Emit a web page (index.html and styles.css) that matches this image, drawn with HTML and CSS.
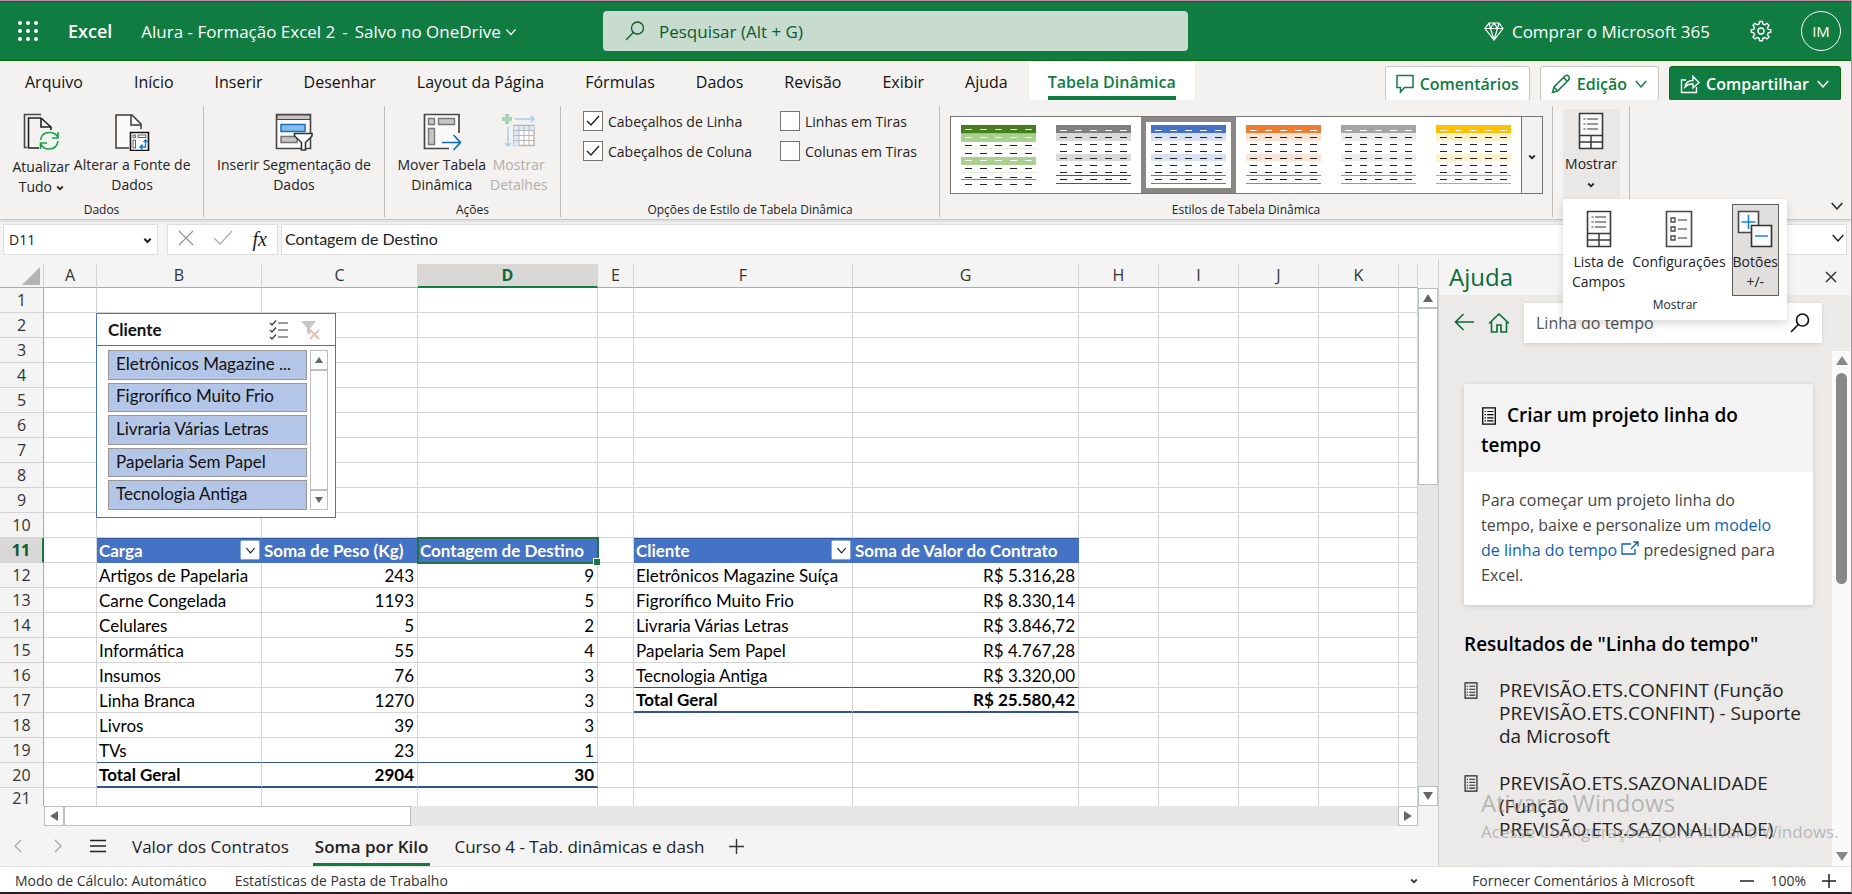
FILE: index.html
```html
<!DOCTYPE html>
<html lang="pt-BR">
<head>
<meta charset="utf-8">
<title>Alura - Formação Excel 2 - Excel</title>
<link rel="stylesheet" href="styles.css">
</head>
<body>
<svg class="sprite" aria-hidden="true">
  <symbol id="chev" viewBox="0 0 12 12"><path d="M1.500 3.500 6 8.500l4.500-5" fill="none" stroke="currentColor" stroke-width="1.300"/></symbol>
  <symbol id="chev-bold" viewBox="0 0 8 8"><path d="M1.200 2.500 4 5.300l2.800-2.800" fill="none" stroke="currentColor" stroke-width="1.800"/></symbol>
  <symbol id="article" viewBox="0 0 16 20"><path d="M1 1h14v18H1z" fill="none" stroke="currentColor" stroke-width="1.400"/><path d="M6 5h7M6 8.500h7M6 12h7M6 15.500h7M3 5h1.500M3 8.500h1.500M3 12h1.500M3 15.500h1.500" stroke="currentColor" stroke-width="1.300"/></symbol>
  <symbol id="fieldlist" viewBox="0 0 26 38"><path d="M1.500 1.500h23v35h-23z" fill="#fafafa" stroke="#3b3a39" stroke-width="1.600"/><path d="M1.500 23.500h23M1.500 30h23M13 23.500v13" stroke="#3b3a39" stroke-width="1.500" fill="none"/><path d="M9 7h11M9 12h11M9 17h11M5.500 7h2M5.500 12h2M5.500 17h2" stroke="#797775" stroke-width="1.500"/></symbol>
  <symbol id="pivot" viewBox="0 0 75 60">
    <path class="c-head" d="M0 0h75v8H0z"/><path class="c-band" d="M0 8h75v8H0zM0 29h75v7H0z"/>
    <path d="M4 5.500h68" stroke="#fff" stroke-dasharray="7 8"/>
    <path d="M4 12.500h68M4 19.500h68M4 26.500h68M4 33.500h68M4 40.500h68M4 47.500h68M4 54.500h68" stroke="#222" stroke-dasharray="7 8"/>
    <path class="c-line" d="M0 50.500h75M0 58.500h75"/>
  </symbol>
</svg>
<div class="app">
  <header class="titlebar">
    <button class="launcher" aria-label="Inicializador de aplicativos">
      <svg width="22" height="22" viewBox="0 0 22 22" fill="#fff"><circle cx="3" cy="3" r="2"/><circle cx="11" cy="3" r="2"/><circle cx="19" cy="3" r="2"/><circle cx="3" cy="11" r="2"/><circle cx="11" cy="11" r="2"/><circle cx="19" cy="11" r="2"/><circle cx="3" cy="19" r="2"/><circle cx="11" cy="19" r="2"/><circle cx="19" cy="19" r="2"/></svg>
    </button>
    <span class="brand">Excel</span>
    <button class="docname"><span>Alura - Formação Excel 2</span><span>-</span><span>Salvo no OneDrive <svg width="12" height="12"><use href="#chev"/></svg></span></button>
    <label class="search">
      <svg width="20" height="20" viewBox="0 0 20 20" fill="none" stroke="#0b5a2e" stroke-width="1.300"><circle cx="12.500" cy="7" r="6"/><path d="M8.300 11.500 1 19"/></svg>
      <input type="search" placeholder="Pesquisar (Alt + G)" aria-label="Pesquisar">
    </label>
    <button class="buy"><svg width="20" height="20" viewBox="0 0 20 20" fill="none" stroke="#fff" stroke-width="1.200"><path d="M5 2h10l4 5.500L10 19 1 7.500zM1 7.500h18M5 2l1.500 5.500L10 19l3.500-11.500L15 2M6.500 7.500 10 2l3.500 5.500"/></svg>Comprar o Microsoft 365</button>
    <button class="gear" aria-label="Configurações"><svg width="22" height="22" viewBox="0 0 22 22" fill="none" stroke="#fff" stroke-width="1.400"><circle cx="11" cy="11" r="3"/><path d="M9.600 1.500h2.800l.5 2.500 1.900.8 2.200-1.500 2 2-1.500 2.200.8 1.900 2.400.5v2.400l-2.400.5-.8 2 1.500 2.100-2 2-2.200-1.400-1.900.8-.5 2.400H9.600l-.5-2.400-1.900-.8L5 18.900l-2-2 1.500-2.100-.8-2-2.400-.5V9.900l2.400-.5.8-1.900L3 5.300l2-2 2.200 1.500L9.100 4z"/></svg></button>
    <button class="avatar">IM</button>
  </header>

  <nav class="tabs">
    <button class="tab file">Arquivo</button><button class="tab">Início</button><button class="tab">Inserir</button><button class="tab">Desenhar</button><button class="tab">Layout da Página</button><button class="tab">Fórmulas</button><button class="tab">Dados</button><button class="tab">Revisão</button><button class="tab">Exibir</button><button class="tab">Ajuda</button><button class="tab active"><span>Tabela Dinâmica</span></button>
    <div class="actions">
      <button class="act"><svg width="18" height="20" viewBox="0 0 18 20" fill="none" stroke="currentColor" stroke-width="1.500"><path d="M1 1.500h16v12H8.500L4.500 18v-4.500H1z"/></svg>Comentários</button>
      <button class="act"><svg width="20" height="20" viewBox="0 0 20 20" fill="none" stroke="currentColor" stroke-width="1.500"><path d="M1.500 18.500 3 13 14 2q2-1.500 3.500 0t0 4L6.500 17zM12.500 3.500l4 4M3 13l3.500 4"/></svg>Edição<svg class="gap" width="14" height="14"><use href="#chev"/></svg></button>
      <button class="act primary"><svg width="20" height="20" viewBox="0 0 20 20" fill="none" stroke="currentColor" stroke-width="1.400"><path d="M6 6H1.500v12.500h15V13M5 13q1-6.500 8-6.500V2.500l6 6-6 5.500v-4Q8 9.500 5 13z"/></svg>Compartilhar<svg class="gap" width="14" height="14"><use href="#chev"/></svg></button>
    </div>
  </nav>

  <section class="ribbon">
    <div class="group g-data">
      <div class="tools">
        <button class="tool low"><svg width="36" height="38" viewBox="0 0 36 38" fill="none"><path d="M18 1.500H1.500v33H4" stroke="#484644" stroke-width="1.600"/><path d="M18 5H5.500v30H16M18 5l10 9v3M18 5v9h10" stroke="#222" stroke-width="1.600"/><path d="M17.500 27q1-7.500 9-7.500 6 0 8.500 5M35 19v6h-6M35 28q-1 8-9 8-6 0-8-5M17.500 36v-6H24" stroke="#16a34a" stroke-width="1.600"/></svg><span>Atualizar<br>Tudo <svg width="8" height="8"><use href="#chev-bold"/></svg></span></button>
        <button class="tool wide"><svg width="36" height="38" viewBox="0 0 36 38" fill="none"><path d="M15 35H2V2h16l9 9v5" fill="#fafafa" stroke="#3b3a39" stroke-width="1.500"/><path d="M17 2v10h10" stroke="#3b3a39" stroke-width="1.500"/><path d="M16.500 19.500h18v18h-18z" fill="#fff" stroke="#111" stroke-width="1.600"/><path d="M19 22h2.500v2.500H19zM24 22h8v2.500h-8zM19 27h2.500v8H19z" stroke="#605e5c"/><path d="M31.500 27v7H26m2.500-2.500L26 34l2.500 2.500M29.500 29l2-2 2 2" stroke="#0078d4" stroke-width="1.300"/></svg><span>Alterar a Fonte de<br>Dados</span></button>
      </div>
      <h2>Dados</h2>
    </div>
    <div class="group g-slicer">
      <div class="tools">
        <button class="tool"><svg width="38" height="38" viewBox="0 0 38 38" fill="none"><path d="M1.500 1.500h34v34h-34z" fill="#fafafa" stroke="#484644" stroke-width="1.600"/><path d="M2 2h33v4.500H2z" fill="#c8c6c4" stroke="#484644"/><path d="M6 11.500h24v7H6z" fill="#83beec" stroke="#1f6fbf" stroke-width="1.500"/><path d="M6 23.500h16v6H6z" fill="#c8c6c4" stroke="#797775" stroke-width="1.500"/><path d="M19.500 20.500H37v2.500l-6.500 6.500V37h-4v-7.500L19.500 23z" fill="#fff" stroke="#333" stroke-width="1.600"/></svg><span>Inserir Segmentação de<br>Dados</span></button>
      </div>
    </div>
    <div class="group g-actions">
      <div class="tools">
        <button class="tool"><svg width="38" height="38" viewBox="0 0 38 38" fill="none"><path d="M36 20V1.500H1.500v34H26" fill="#fafafa" stroke="#484644" stroke-width="1.700"/><path d="M5.500 5.500h6v6h-6zM15.500 5.500h16v6h-16zM5.500 15.500h6v16h-6z" fill="#c8c6c4" stroke="#797775" stroke-width="1.400"/><path d="M19 29.500h18M30.500 22l7 7.500-7 7.500" stroke="#0f6cbd" stroke-width="1.600"/></svg><span>Mover Tabela<br>Dinâmica</span></button>
        <button class="tool" disabled><svg width="34" height="38" viewBox="0 0 34 38" fill="none"><path d="M5 1v10M0 6h10" stroke="#a9d3b9" stroke-width="4"/><path d="M13 6h19m-3-3 3 3-3 3M6 14v19m-3-3 3 3 3-3" stroke="#a6cdec" stroke-width="1.500"/><path d="M12 12.500h20v20H12z" fill="#fff" stroke="#b9b7b5" stroke-width="1.500"/><path d="M12 13h20v4H12zM12 13h5v20h-5z" fill="#dcebf7"/><path d="M17 13v20M22 13v20M27 13v20M12 17.500h20M12 22.500h20M12 27.500h20" stroke="#b9b7b5"/></svg><span>Mostrar<br>Detalhes</span></button>
      </div>
      <h2>Ações</h2>
    </div>
    <div class="group g-options">
      <div class="checks">
        <label><input type="checkbox" checked>Cabeçalhos de Linha</label>
        <label><input type="checkbox">Linhas em Tiras</label>
        <label><input type="checkbox" checked>Cabeçalhos de Coluna</label>
        <label><input type="checkbox">Colunas em Tiras</label>
      </div>
      <h2>Opções de Estilo de Tabela Dinâmica</h2>
    </div>
    <div class="group g-styles">
      <div class="gallery">
        <button class="style" aria-label="Verde"><svg width="75" height="61" viewBox="0 0 75 61"><path d="M0 1h75v7H0z" fill="#4a7d22"/><path d="M0 .5h75M0 8h75" stroke="#2f8a12"/><path d="M0 9h75v8H0zM0 32h75v8H0z" fill="#a9d08e"/><path d="M4 4.500h68" stroke="#f4ffd0" stroke-dasharray="7 8"/><path d="M4 12.500h68M4 35.500h68" stroke="#fff" stroke-dasharray="7 8"/><path d="M0 23.500h75M0 47.500h75" stroke="#e2efda"/><path d="M0 54.500h75" stroke="#70a050"/><path d="M4 20.500h68M4 28.500h68M4 43.500h68M4 52.500h68M4 59.500h68" stroke="#222" stroke-dasharray="7 8"/></svg></button>
        <button class="style dark" aria-label="Cinza escuro"><svg width="75" height="60"><use href="#pivot"/></svg></button>
        <button class="style blue selected" aria-label="Azul"><svg width="75" height="60"><use href="#pivot"/></svg></button>
        <button class="style orange" aria-label="Laranja"><svg width="75" height="60"><use href="#pivot"/></svg></button>
        <button class="style gray" aria-label="Cinza"><svg width="75" height="60"><use href="#pivot"/></svg></button>
        <button class="style gold" aria-label="Ouro"><svg width="75" height="60"><use href="#pivot"/></svg></button>
        <button class="more" aria-label="Mais estilos"><svg width="8" height="8"><use href="#chev-bold"/></svg></button>
      </div>
      <h2>Estilos de Tabela Dinâmica</h2>
    </div>
    <div class="group g-show">
      <button class="tool open"><svg width="26" height="38"><use href="#fieldlist"/></svg><span>Mostrar<br><svg width="8" height="8"><use href="#chev-bold"/></svg></span></button>
      <div class="flyout">
        <div class="flyout-tools">
          <button class="tool"><svg width="26" height="38"><use href="#fieldlist"/></svg><span>Lista de<br>Campos</span></button>
          <button class="tool"><svg width="28" height="38" viewBox="0 0 28 38" fill="none"><path d="M1.500 1.500h25v35h-25z" fill="#fafafa" stroke="#484644" stroke-width="1.600"/><path d="M6 8h4v4H6zM6 17h4v4H6zM6 26h4v4H6z" stroke="#484644" stroke-width="1.300"/><path d="M13 10h9M13 19h9M13 28h9" stroke="#797775" stroke-width="1.500"/></svg><span>Configurações</span></button>
          <button class="tool pressed"><svg width="36" height="38" viewBox="0 0 36 38"><path d="M1.500 1.500h20v21h-20z" fill="#fafafa" stroke="#484644" stroke-width="1.600"/><path d="M14.500 15.500h20v21h-20z" fill="#fafafa" stroke="#323130" stroke-width="1.600"/><path d="M4.500 12h14M11.500 5v14M18 26h13" stroke="#1a86d9" stroke-width="1.600"/></svg><span>Botões<br>+/-</span></button>
        </div>
        <h2>Mostrar</h2>
      </div>
    </div>
    <button class="collapse" aria-label="Recolher"><svg width="14" height="14"><use href="#chev"/></svg></button>
  </section>

  <section class="formula">
    <div class="namebox"><input type="text" value="D11" aria-label="Caixa de nome"><button aria-label="Abrir nomes"><svg width="9" height="9"><use href="#chev-bold"/></svg></button></div>
    <div class="fxbox">
      <button aria-label="Cancelar"><svg width="16" height="16" viewBox="0 0 16 16" fill="none" stroke="#979593" stroke-width="1.200"><path d="m1 1 14 14M15 1 1 15"/></svg></button>
      <button aria-label="Inserir"><svg width="20" height="16" viewBox="0 0 20 16" fill="none" stroke="#b3b0ad" stroke-width="1.300"><path d="m1 8 6 6L19 1"/></svg></button>
      <button class="fx">fx</button>
    </div>
    <div class="fbar"><input type="text" value="Contagem de Destino" aria-label="Barra de fórmulas"><button aria-label="Expandir"><svg width="14" height="14"><use href="#chev"/></svg></button></div>
  </section>

  <main class="work">
    <section class="book">
      <div class="gridrow">
        <div class="sheet">
          <table class="grid">
            <colgroup><col class="w-h"><col class="w-a"><col class="w-b"><col class="w-c"><col class="w-d"><col class="w-e"><col class="w-f"><col class="w-g"><col class="w-n"><col class="w-n"><col class="w-n"><col class="w-n"><col></colgroup>
            <thead><tr><th class="corner"><svg width="18" height="18" viewBox="0 0 18 18"><path d="M18 0v18H0z" fill="#b4b4b4"/></svg></th><th>A</th><th>B</th><th>C</th><th class="on">D</th><th>E</th><th>F</th><th>G</th><th>H</th><th>I</th><th>J</th><th>K</th><th></th></tr></thead>
            <tbody>
            <tr><th>1</th><td></td><td></td><td></td><td></td><td></td><td></td><td></td><td></td><td></td><td></td><td></td><td></td></tr>
            <tr><th>2</th><td></td><td></td><td></td><td></td><td></td><td></td><td></td><td></td><td></td><td></td><td></td><td></td></tr>
            <tr><th>3</th><td></td><td></td><td></td><td></td><td></td><td></td><td></td><td></td><td></td><td></td><td></td><td></td></tr>
            <tr><th>4</th><td></td><td></td><td></td><td></td><td></td><td></td><td></td><td></td><td></td><td></td><td></td><td></td></tr>
            <tr><th>5</th><td></td><td></td><td></td><td></td><td></td><td></td><td></td><td></td><td></td><td></td><td></td><td></td></tr>
            <tr><th>6</th><td></td><td></td><td></td><td></td><td></td><td></td><td></td><td></td><td></td><td></td><td></td><td></td></tr>
            <tr><th>7</th><td></td><td></td><td></td><td></td><td></td><td></td><td></td><td></td><td></td><td></td><td></td><td></td></tr>
            <tr><th>8</th><td></td><td></td><td></td><td></td><td></td><td></td><td></td><td></td><td></td><td></td><td></td><td></td></tr>
            <tr><th>9</th><td></td><td></td><td></td><td></td><td></td><td></td><td></td><td></td><td></td><td></td><td></td><td></td></tr>
            <tr><th>10</th><td></td><td></td><td></td><td></td><td></td><td></td><td></td><td></td><td></td><td></td><td></td><td></td></tr>
            <tr><th class="on">11</th><td></td><td class="hd"><div class="hdin">Carga<button aria-label="Filtrar Carga"><svg width="11" height="11"><use href="#chev"/></svg></button></div></td><td class="hd">Soma de Peso (Kg)</td><td class="hd sel">Contagem de Destino</td><td></td><td class="hd"><div class="hdin">Cliente<button aria-label="Filtrar Cliente"><svg width="11" height="11"><use href="#chev"/></svg></button></div></td><td class="hd">Soma de Valor do Contrato</td><td></td><td></td><td></td><td></td><td></td></tr>
            <tr><th>12</th><td></td><td>Artigos de Papelaria</td><td class="n">243</td><td class="n">9</td><td></td><td>Eletrônicos Magazine Suíça</td><td class="n">R$ 5.316,28</td><td></td><td></td><td></td><td></td><td></td></tr>
            <tr><th>13</th><td></td><td>Carne Congelada</td><td class="n">1193</td><td class="n">5</td><td></td><td>Figrorífico Muito Frio</td><td class="n">R$ 8.330,14</td><td></td><td></td><td></td><td></td><td></td></tr>
            <tr><th>14</th><td></td><td>Celulares</td><td class="n">5</td><td class="n">2</td><td></td><td>Livraria Várias Letras</td><td class="n">R$ 3.846,72</td><td></td><td></td><td></td><td></td><td></td></tr>
            <tr><th>15</th><td></td><td>Informática</td><td class="n">55</td><td class="n">4</td><td></td><td>Papelaria Sem Papel</td><td class="n">R$ 4.767,28</td><td></td><td></td><td></td><td></td><td></td></tr>
            <tr><th>16</th><td></td><td>Insumos</td><td class="n">76</td><td class="n">3</td><td></td><td class="last">Tecnologia Antiga</td><td class="n last">R$ 3.320,00</td><td></td><td></td><td></td><td></td><td></td></tr>
            <tr><th>17</th><td></td><td>Linha Branca</td><td class="n">1270</td><td class="n">3</td><td></td><td class="tot">Total Geral</td><td class="n tot">R$ 25.580,42</td><td></td><td></td><td></td><td></td><td></td></tr>
            <tr><th>18</th><td></td><td>Livros</td><td class="n">39</td><td class="n">3</td><td></td><td></td><td></td><td></td><td></td><td></td><td></td><td></td></tr>
            <tr><th>19</th><td></td><td class="last">TVs</td><td class="n last">23</td><td class="n last">1</td><td></td><td></td><td></td><td></td><td></td><td></td><td></td><td></td></tr>
            <tr><th>20</th><td></td><td class="tot">Total Geral</td><td class="n tot">2904</td><td class="n tot">30</td><td></td><td></td><td></td><td></td><td></td><td></td><td></td><td></td></tr>
            <tr class="cut"><th>21</th><td></td><td></td><td></td><td></td><td></td><td></td><td></td><td></td><td></td><td></td><td></td><td></td></tr>
            </tbody>
          </table>
          <aside class="slicer">
            <div class="slicer-head"><h3>Cliente</h3>
              <button aria-label="Seleção múltipla"><svg width="20" height="20" viewBox="0 0 20 20" fill="none" stroke="#444" stroke-width="1.400"><path d="M9 3h10M9 10h10M9 17h10" stroke="#797775"/><path d="m1 3 2 2 4-4.500M1 10l2 2 4-4.500M1 17l2 2 4-4.500"/></svg></button>
              <button aria-label="Limpar filtro"><svg width="20" height="20" viewBox="0 0 20 20" fill="none"><path d="M0 1h15L9.500 8v7L6 12.500V8z" fill="#c8c6c4"/><path d="m9 10 9 9M18 10l-9 9" stroke="#f3b9ac" stroke-width="1.800"/></svg></button>
            </div>
            <div class="slicer-body">
              <div class="slicer-items"><button>Eletrônicos Magazine ...</button><button>Figrorífico Muito Frio</button><button>Livraria Várias Letras</button><button>Papelaria Sem Papel</button><button>Tecnologia Antiga</button></div>
              <div class="sbar"><span class="arr up"></span><span class="thumb"></span><span class="arr down"></span></div>
            </div>
          </aside>
        </div>
        <div class="vscroll"><span class="arr up"></span><span class="thumb"></span><span class="track"></span><span class="arr down"></span></div>
      </div>
      <div class="hscroll"><span class="arr left"></span><span class="thumb"></span><span class="track"></span><span class="arr right"></span></div>
      <nav class="sheettabs">
        <button class="nav" aria-label="Anterior"><svg width="10" height="14" viewBox="0 0 10 14" fill="none" stroke="#a8a8a8" stroke-width="1.300"><path d="M8 1 2 7l6 6"/></svg></button>
        <button class="nav" aria-label="Próxima"><svg width="10" height="14" viewBox="0 0 10 14" fill="none" stroke="#a8a8a8" stroke-width="1.300"><path d="m2 1 6 6-6 6"/></svg></button>
        <button class="nav" aria-label="Todas as planilhas"><svg width="16" height="14" viewBox="0 0 16 14" stroke="#222" stroke-width="1.500"><path d="M0 1.500h16M0 7h16M0 12.500h16"/></svg></button>
        <button class="st">Valor dos Contratos</button><button class="st on">Soma por Kilo</button><button class="st">Curso 4 - Tab. dinâmicas e dash</button>
        <button class="nav" aria-label="Nova planilha"><svg width="15" height="15" viewBox="0 0 15 15" stroke="#333" stroke-width="1.400"><path d="M7.500 0v15M0 7.500h15"/></svg></button>
      </nav>
    </section>

    <aside class="help">
      <div class="help-head"><h2>Ajuda</h2><button aria-label="Fechar"><svg width="12" height="12" viewBox="0 0 12 12" stroke="#333" stroke-width="1.500"><path d="m1 1 10 10M11 1 1 11"/></svg></button></div>
      <div class="help-nav">
        <button aria-label="Voltar"><svg width="20" height="18" viewBox="0 0 20 18" fill="none" stroke="#0b6a37" stroke-width="1.600"><path d="M20 9H1.500M9.500 1l-8 8 8 8"/></svg></button>
        <button aria-label="Início"><svg width="22" height="20" viewBox="0 0 22 20" fill="none" stroke="#0b6a37" stroke-width="1.600"><path d="M1 10.500 11 1l10 9.500M3.500 9v10H9v-7h4v7h5.500V9"/></svg></button>
        <label><input type="text" value="Linha do tempo" aria-label="Pesquisar na Ajuda"><svg width="20" height="20" viewBox="0 0 20 20" fill="none" stroke="#111" stroke-width="1.700"><circle cx="12.500" cy="7" r="6"/><path d="M8.300 11.500 1 19"/></svg></label>
      </div>
      <div class="help-main">
        <div class="help-content">
          <article class="card">
            <h3><svg width="16" height="18"><use href="#article"/></svg>Criar um projeto linha do tempo</h3>
            <p>Para começar um projeto linha do tempo, baixe e personalize um <a href="#">modelo de linha do tempo <svg width="18" height="15" viewBox="0 0 18 15" fill="none" stroke="currentColor" stroke-width="1.300"><path d="M10 3H1v10h13V8M10 8l7-7M12.500 1H17v4.500"/></svg></a> predesigned para Excel.</p>
          </article>
          <h3 class="results">Resultados de "Linha do tempo"</h3>
          <ul>
            <li><svg width="14" height="17"><use href="#article"/></svg><a href="#">PREVISÃO.ETS.CONFINT (Função PREVISÃO.ETS.CONFINT) - Suporte da Microsoft</a></li>
            <li><svg width="14" height="17"><use href="#article"/></svg><a href="#">PREVISÃO.ETS.SAZONALIDADE (Função PREVISÃO.ETS.SAZONALIDADE)</a></li>
          </ul>
        </div>
        <div class="hbar"><span class="tri up"></span><span class="pill"></span><span class="tri down"></span></div>
      </div>
      <div class="watermark"><strong>Ativar o Windows</strong><span>Acesse Configurações para ativar o Windows.</span></div>
    </aside>
  </main>

  <footer class="status">
    <span class="calc">Modo de Cálculo: Automático</span><span>Estatísticas de Pasta de Trabalho</span>
    <button class="opts" aria-label="Opções"><svg width="8" height="8"><use href="#chev-bold"/></svg></button>
    <a href="#">Fornecer Comentários à Microsoft</a>
    <button aria-label="Reduzir"><svg width="14" height="14" viewBox="0 0 14 14" stroke="#222" stroke-width="1.500"><path d="M0 7h14"/></svg></button><span class="pct">100%</span><button aria-label="Ampliar"><svg width="14" height="14" viewBox="0 0 14 14" stroke="#222" stroke-width="1.500"><path d="M0 7h14M7 0v14"/></svg></button>
  </footer>
</div>
</body>
</html>
```
FILE: styles.css
```css
* { box-sizing: border-box; }
body { margin: 0; font-family: "Open Sans", "Noto Sans", sans-serif; font-size: 14px; color: #222; }
button, input { font: inherit; color: inherit; background: none; border: 0; padding: 0; margin: 0; outline: 0; }
h2, h3, p, ul { margin: 0; padding: 0; font-weight: 400; }
a { color: inherit; text-decoration: none; }
.sprite { position: absolute; width: 0; height: 0; }
.app { height: 100vh; display: flex; flex-direction: column; border-top: 1px solid #c48ba6; border-right: 1px solid #c48ba6; border-bottom: 2px solid #2b1a22; background: #f4f4f4; overflow: hidden; }

.titlebar { flex: none; height: 60px; background: #107c41; border: solid #0b6a0b; border-width: 1px 0; color: #fff; display: flex; align-items: center; position: relative; padding-right: 10px; font-size: 17px; }
.launcher { margin-left: 17px; height: 22px; }
.brand { margin-left: 29px; font-weight: 600; font-size: 18px; }
.docname { margin-left: 29px; display: flex; gap: 7px; }
.search { position: absolute; left: 603px; width: 32%; max-width: 585px; height: 40px; background: #c7dbcf; border-radius: 4px; display: flex; align-items: center; padding-left: 22px; gap: 14px; }
.search input { flex: 1; color: #0b5a2e; }
.search input::placeholder { color: #0b5a2e; opacity: 1; }
.buy { margin-left: auto; display: flex; align-items: center; gap: 8px; }
.gear { margin-left: 40px; height: 22px; }
.avatar { margin-left: 29px; width: 40px; height: 40px; border: 1px solid #fff; border-radius: 50%; font-size: 15px; }

.tabs { flex: none; height: 39px; display: flex; align-items: stretch; gap: 1px; background: #f3f2f1; padding-right: 10px; }
.tab { padding: 2px 20px 0; font-size: 16px; color: #111; }
.tab.file { padding-left: 25px; padding-right: 30px; }
.tab.active { background: #fff; color: #107c41; font-weight: 600; padding: 0 19px; display: flex; align-items: stretch; }
.tab.active span { border-bottom: 4px solid #107c41; padding-top: 10px; }
.actions { margin-left: auto; display: flex; gap: 10px; padding-top: 5px; }
.act { display: flex; align-items: center; gap: 6px; height: 35px; padding: 0 10px; background: #fff; border: 1px solid #c8c6c4; border-radius: 3px; color: #107c41; font-weight: 600; font-size: 16px; }
.act .gap { margin-left: 1px; }
.act.primary { background: #107c41; border-color: #0b6a0b; color: #fff; }

.ribbon { flex: none; height: 120px; background: #f3f2f1; border-bottom: 1px solid #c8c6c4; box-shadow: 0 2px 3px #00000018; display: flex; padding: 6px 0 2px; position: relative; z-index: 3; }
.group { border-right: 1px solid #bebbb8; display: flex; flex-direction: column; align-items: center; justify-content: space-between; height: 111px; }
.group h2 { font-size: 12px; line-height: 14px; color: #222; }
.g-data { width: 204px; } .g-slicer { width: 181px; } .g-actions { width: 176px; } .g-options { width: 379px; } .g-styles { width: 613px; } .g-show { width: 77px; position: relative; }
.tools { display: flex; justify-content: center; gap: 4px; width: 100%; padding-top: 7px; }
.tool { display: flex; flex-direction: column; align-items: center; font-size: 14px; line-height: 20px; gap: 4px; white-space: nowrap; color: #222; }
.tool svg { flex: none; }
.tool.low { gap: 6px; }
.tool:disabled { color: #b0aeac; }
.checks { display: grid; grid-template-columns: 197px auto; row-gap: 10px; align-self: flex-start; padding: 5px 0 0 22px; }
.checks label { display: flex; align-items: center; gap: 5px; height: 20px; font-size: 14px; }
.checks input { appearance: none; width: 20px; height: 20px; border: 1px solid #797775; background: #fff; flex: none; }
.checks input:checked { background: #fff url("data:image/svg+xml,%3Csvg xmlns='http://www.w3.org/2000/svg' viewBox='0 0 18 18' fill='none' stroke='%23222' stroke-width='1.400'%3E%3Cpath d='m3 9 4 4 8-9'/%3E%3C/svg%3E"); }
.gallery { display: flex; margin-top: 10px; height: 78px; border: 1px solid #797775; background: #fff; }
.style { width: 95px; height: 76px; display: grid; place-items: center; border: 5px solid transparent; }
.selected { border-color: #888785; }
.more { width: 21px; border-left: 1px solid #797775; background: #f3f2f1; }
.dark { --h: #7f7f7f; --b: #d9d9d9; --l: #555; } .blue { --h: #4472c4; --b: #d9e1f2; --l: #5b7dbd; } .orange { --h: #ed7d31; --b: #fbe3d6; --l: #d9743a; } .gray { --h: #a5a5a5; --b: #ededed; --l: #999; } .gold { --h: #ffc000; --b: #fff2cc; --l: #d6a92b; }
.c-head { fill: var(--h); } .c-band { fill: var(--b); } .c-line { stroke: var(--l); }
.open { background: #e9e8e7; width: 57px; height: 91px; margin-top: 3px; padding-top: 3px; }
.flyout { position: absolute; left: 10px; top: 93px; width: 224px; height: 121px; background: #fff; box-shadow: 0 4px 9px #00000026; border-radius: 2px; display: flex; flex-direction: column; align-items: center; padding-top: 6px; gap: 3px; }
.flyout-tools { display: flex; justify-content: space-between; width: 100%; padding: 0 9px; }
.flyout .tool { height: 90px; padding-top: 5px; font-size: 14px; }
.flyout .pressed { background: #e1dfdd; outline: 1px solid #605e5c; }
.collapse { margin: auto 7px 0 auto; }

.formula { flex: none; display: flex; align-items: center; height: 39px; padding: 4px 4px 4px 3px; }
.namebox, .fxbox, .fbar { height: 31px; background: #fff; border: 1px solid #e1dfdd; display: flex; align-items: center; }
.namebox { width: 155px; padding: 0 5px; }
.namebox input { flex: 1; min-width: 0; font-size: 14px; }
.fxbox { width: 111px; margin: 0 3px 0 9px; justify-content: space-between; padding: 0 10px; }
.fx { font: italic 400 20px "Liberation Serif", serif; -webkit-text-stroke: 0; }
.fbar { flex: 1; padding: 0 1px 0 3px; }
.fbar input { flex: 1; font-family: Lato, sans-serif; font-size: 16px; padding-bottom: 3px; }

.work { flex: 1; min-height: 0; display: flex; }
.book { flex: 1; min-width: 0; display: flex; flex-direction: column; padding-top: 5px; }
.gridrow { flex: 1; min-height: 0; display: flex; }
.sheet { flex: 1; min-width: 0; overflow: hidden; position: relative; }
.grid { width: 100%; table-layout: fixed; border-collapse: separate; border-spacing: 0; font-family: Lato, sans-serif; font-size: 17px; color: #000; }
.w-h { width: 44px; } .w-a { width: 53px; } .w-b { width: 165px; } .w-c { width: 156px; } .w-d { width: 180px; } .w-e { width: 36px; } .w-f { width: 219px; } .w-g { width: 226px; } .w-n { width: 80px; }
.grid th { font: 400 16px/22px "Open Sans", sans-serif; color: #333; background: #f4f4f4; border: solid #d4d4d4; border-width: 0 1px 1px 0; padding: 0; }
.grid thead th { height: 24px; border-bottom-color: #ababab; line-height: 20px; padding-bottom: 2px; }
.grid thead th.on { background: #d9d8d6; color: #0b6a37; font-weight: 700; border-bottom: 2px solid #107c41; padding-bottom: 1px; }
.grid tbody th { height: 25px; border-right-color: #ababab; }
.grid tbody th.on { background: #d9d8d6; color: #0b5a2e; font-weight: 700; border-right: 2px solid #107c41; }
.corner svg { display: block; margin: 2px 3px 0 auto; }
.grid td { height: 25px; padding: 0 3px 0 2px; background: #fff; border: solid #d4d4d4; border-width: 0 1px 1px 0; line-height: 23px; white-space: nowrap; }
.grid .n { text-align: right; }
.grid .hd { background: #4472c4; color: #fff; font-weight: 700; border-color: #4472c4; box-shadow: inset 0 1px #2f5597; }
.grid .sel { outline: 2px solid #217346; outline-offset: -1px; position: relative; }
.sel::after { content: ""; position: absolute; right: -3px; bottom: -3px; width: 6px; height: 6px; background: #217346; border: solid #fff; border-width: 1px 0 0 1px; }
.hdin { display: flex; justify-content: space-between; align-items: center; }
.hdin button { width: 20px; height: 20px; background: #fff; border: 1px solid #8aa6d8; border-radius: 2px; display: grid; place-items: center; color: #222; margin-right: -2px; }
.grid .last { border-bottom-color: #2f5597; }
.grid .tot { font-weight: 700; border-bottom: 2px solid #2f5597; }
.grid .cut th, .grid .cut td { height: 20px; line-height: 20px; border-bottom: 0; }

.slicer { position: absolute; left: 96px; top: 49px; width: 240px; height: 205px; background: #fff; border: 1px solid #4472c4; display: flex; flex-direction: column; font-family: Lato, sans-serif; font-size: 17px; color: #111; }
.slicer-head { display: flex; align-items: center; height: 32px; border-bottom: 1px solid #4472c4; padding: 0 14px 0 11px; gap: 12px; }
.slicer-head h3 { flex: 1; font-size: 17px; font-weight: 700; }
.slicer-head button { height: 20px; }
.slicer-body { flex: 1; display: flex; gap: 3px; padding: 4px 7px 7px 11px; }
.slicer-items { flex: 1; display: flex; flex-direction: column; gap: 3px; }
.slicer-items button { flex: 1; background: #b4c6e7; border: 1px solid #999; text-align: left; padding: 0 0 2px 7px; line-height: 22px; }
.sbar { width: 18px; display: flex; flex-direction: column; }
.thumb { background: #fff; border: 1px solid #bcbfc2; }
.sbar .thumb { flex: 1; }
.arr { flex: none; width: 20px; height: 20px; background: #fff; border: 1px solid #bcbfc2; display: grid; place-items: center; }
.sbar .arr { width: 18px; }
.arr::before { content: ""; border: 5px solid transparent; border-width: 0 5px 8px; border-bottom-color: #666; }
.down::before { transform: rotate(180deg); } .left::before { transform: rotate(-90deg); } .right::before { transform: rotate(90deg); }
.sbar .arr::before { border-width: 0 4px 6px; }
.vscroll { width: 20px; padding-top: 24px; display: flex; flex-direction: column; }
.vscroll .thumb { height: 177px; }
.track { flex: 1; background: #e6e6e6; }
.hscroll { display: flex; padding: 0 20px 0 44px; height: 20px; }
.hscroll .thumb { width: 347px; }
.sheettabs { height: 40px; display: flex; align-items: center; padding-left: 10px; }
.sheettabs .nav { width: 16px; height: 16px; margin-right: 24px; display: grid; place-items: center; }
.st { height: 40px; padding: 0 2px; font-size: 17px; margin-right: 22px; white-space: nowrap; }
.st.on { font-weight: 600; border-bottom: 3px solid #107c41; padding-top: 3px; }

.help { width: 413px; flex: none; border-left: 1px solid #d0cfce; background: #ebeae9; display: flex; flex-direction: column; position: relative; min-height: 0; }
.help-head { background: #f4f4f4; height: 36px; display: flex; align-items: center; justify-content: space-between; padding: 0 14px 0 10px; color: #0b6a37; }
.help-head h2 { font-size: 24px; line-height: 34px; }
.help-nav { display: flex; align-items: center; height: 56px; padding: 0 29px 0 15px; }
.help-nav button { margin-right: 14px; height: 20px; }
.help-nav label { flex: 1; display: flex; align-items: center; height: 40px; background: #fff; padding: 0 12px; box-shadow: 0 1px 4px #00000020; }
.help-nav input { flex: 1; min-width: 0; font-size: 16px; color: #555; }
.help-main { flex: 1; min-height: 0; display: flex; }
.help-content { flex: 1; overflow: hidden; padding: 33px 19px 0 25px; }
.card { background: #fff; border-radius: 2px; box-shadow: 0 1px 5px #00000025; }
.card h3 { background: #f3f3f3; padding: 16px 17px 12px; font-size: 19px; line-height: 30px; font-weight: 600; color: #000; }
.card h3 svg { margin-right: 10px; vertical-align: -3px; }
.card p { padding: 16px 24px 17px 17px; font-size: 16px; line-height: 25px; color: #444; }
.card a { color: #0f5fb0; }
.results { margin-top: 24px; font-size: 19px; line-height: 30px; font-weight: 600; color: #000; }
.help ul { list-style: none; margin-top: 20px; }
.help li { display: flex; gap: 21px; margin-bottom: 24px; font-size: 19px; line-height: 23px; }
.help li svg { flex: none; margin-top: 3px; }
.hbar { width: 19px; background: #fafafa; display: flex; flex-direction: column; align-items: center; padding: 5px 0; gap: 8px; }
.tri { border: solid transparent; border-width: 0 6px 9px; border-bottom-color: #888; }
.tri.down { transform: rotate(180deg); margin-top: auto; }
.pill { width: 11px; height: 211px; border-radius: 6px; background: #888; }
.watermark { position: absolute; left: 42px; top: 527px; display: flex; flex-direction: column; color: #8888888c; font-size: 17px; white-space: nowrap; pointer-events: none; }
.watermark strong { font-weight: 400; font-size: 24px; line-height: 34px; }

.status { flex: none; height: 26px; background: #fff; border-top: 1px solid #e1dfdd; display: flex; align-items: center; padding: 2px 15px 0 15px; gap: 22px; color: #333; }
.status button { display: grid; place-items: center; height: 14px; }
.calc { margin-right: 6px; }
.opts { margin-left: auto; margin-right: 32px; }
.status a { margin-right: 24px; }
.pct { margin: 0 -6px; }
```
